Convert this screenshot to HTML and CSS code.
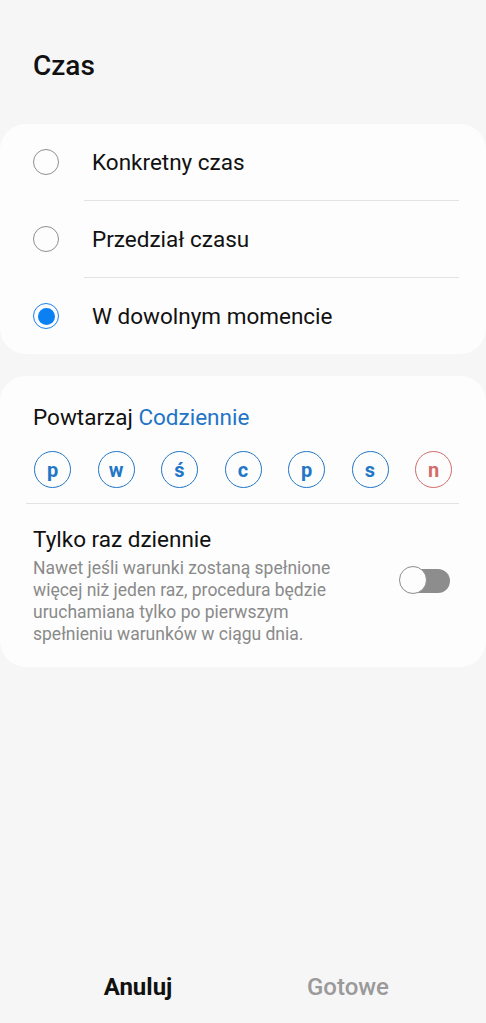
FILE: index.html
```html
<!DOCTYPE html>
<html>

<head>
    <meta charset="utf-8">
    <title>Czas</title>
    <link rel="stylesheet" href="styles.css">
</head>

<body>
  <div class="page">
    <h1 class="title">Czas</h1>

    <div class="card options">
      <div class="option">
        <span class="radio"></span>
        <span class="label">Konkretny czas</span>
      </div>
      <div class="divider"></div>
      <div class="option">
        <span class="radio"></span>
        <span class="label">Przedział czasu</span>
      </div>
      <div class="divider"></div>
      <div class="option">
        <span class="radio checked"></span>
        <span class="label">W dowolnym momencie</span>
      </div>
    </div>

    <div class="card repeat">
      <div class="repeat-title">Powtarzaj <span class="accent">Codziennie</span></div>
      <div class="days">
        <span class="day">p</span>
        <span class="day">w</span>
        <span class="day">ś</span>
        <span class="day">c</span>
        <span class="day">p</span>
        <span class="day">s</span>
        <span class="day sunday">n</span>
      </div>
      <div class="divider wide"></div>
      <div class="once">
        <div class="once-text">
          <div class="once-title">Tylko raz dziennie</div>
          <div class="once-desc">Nawet jeśli warunki zostaną spełnione więcej niż jeden raz, procedura będzie uruchamiana tylko po pierwszym spełnieniu warunków w ciągu dnia.</div>
        </div>
        <div class="switch"><span class="thumb"></span></div>
      </div>
    </div>

    <div class="footer">
      <span class="btn">Anuluj</span>
      <span class="btn disabled">Gotowe</span>
    </div>
  </div>
</body>
</html>
```

FILE: styles.css
```css
body {
  margin: 0;
  background-color: #f6f6f6;
  font-family: Roboto, "Noto Sans", sans-serif;
  color: #111;
}

.page {
  min-height: 1023px;
  display: flex;
  flex-direction: column;
}

.title {
  margin: 50px 0 42px 33px;
  font-size: 28px;
  line-height: 32px;
  font-weight: 500;
}

.card {
  background-color: #fdfdfd;
  border-radius: 26px;
}

.option {
  height: 76px;
  display: flex;
  align-items: center;
  padding-left: 33px;
}

.radio {
  width: 24px;
  height: 24px;
  border: 1.5px solid #8f8f8f;
  border-radius: 50%;
  display: flex;
  align-items: center;
  justify-content: center;
}

.radio.checked {
  border-color: #1c80ee;
}

.radio.checked::after {
  content: "";
  width: 17px;
  height: 17px;
  border-radius: 50%;
  background-color: #0b80f2;
}

.label {
  margin-left: 33px;
  font-size: 22.5px;
}

.divider {
  height: 1px;
  background-color: #e3e3e3;
  margin: 0 27px 0 84px;
}

.divider.wide {
  margin: 15px 27px 0 26px;
}

.repeat {
  margin-top: 22px;
  padding: 28px 0 22px;
}

.repeat-title {
  padding-left: 33px;
  font-size: 22.5px;
  line-height: 26px;
}

.accent {
  color: #2474c6;
}

.days {
  display: flex;
  justify-content: space-between;
  margin: 21px 34px 0 34px;
}

.day {
  width: 35px;
  height: 35px;
  border: 1.5px solid #2276c6;
  border-radius: 50%;
  color: #2276c6;
  font-size: 20px;
  font-weight: 700;
  display: flex;
  align-items: center;
  justify-content: center;
}

.day.sunday {
  border-color: #d46b6b;
  color: #d46b6b;
}

.once {
  display: flex;
  align-items: center;
  padding: 21px 36px 0 33px;
}

.once-text {
  flex: 1;
  max-width: 320px;
}

.once-title {
  font-size: 22.5px;
  line-height: 28px;
}

.once-desc {
  margin-top: 4px;
  font-size: 17.5px;
  line-height: 22px;
  color: #8a8a8a;
}

.switch {
  margin: 0 0 8px auto;
  width: 50px;
  height: 24px;
  border-radius: 12px;
  background-color: #8d8d8d;
  position: relative;
}

.thumb {
  position: absolute;
  left: -1px;
  top: -3px;
  width: 26px;
  height: 26px;
  border: 1.5px solid #8d8d8d;
  border-radius: 50%;
  background-color: #fdfdfd;
}

.footer {
  margin-top: auto;
  height: 72px;
  padding: 0 33px;
  display: flex;
  align-items: center;
}

.btn {
  flex: 1;
  text-align: center;
  font-size: 24px;
  font-weight: 700;
  color: #111;
}

.btn.disabled {
  font-weight: 500;
  color: #9a9a9a;
}
```
